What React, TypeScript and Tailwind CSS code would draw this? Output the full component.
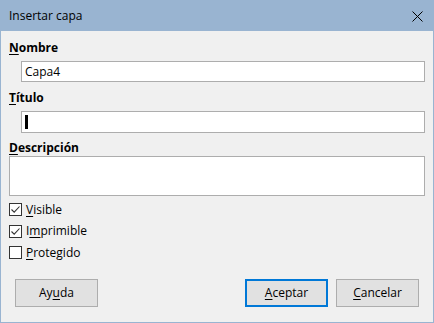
import React from 'react';

const font = { fontFamily: '"Open Sans", "Noto Sans", sans-serif' };

const Check = ({ checked }: { checked: boolean }) => (
  <span className="flex h-[13px] w-[13px] items-center justify-center border border-[#333333] bg-white">
    {checked && (
      <svg width="11" height="11" viewBox="0 0 11 11">
        <path d="M1.5 5.5 L4.2 8.2 L9.5 2.5" fill="none" stroke="#333333" strokeWidth="1.1" />
      </svg>
    )}
  </span>
);

const Btn = ({ children, primary }: { children: React.ReactNode; primary?: boolean }) => (
  <button
    className={`flex h-[28px] w-[83px] items-center justify-center bg-[#e1e1e1] text-[12px] text-black ${
      primary ? 'border-2 border-[#0078d7]' : 'border border-[#adadad]'
    }`}
  >
    {children}
  </button>
);

export default function App() {
  return (
    <div
      style={font}
      className="flex h-[323px] w-[434px] flex-col border border-[#99b4d1] bg-[#f0f0f0] text-[12px] text-black"
    >
      {/* Title bar */}
      <div className="flex h-[30px] shrink-0 items-center justify-between bg-[#99b4d1] pl-2 pr-[10px]">
        <span className="text-[12px] text-black">Insertar capa</span>
        <svg width="11" height="11" viewBox="0 0 11 11">
          <path d="M0.5 0.5 L10.5 10.5 M10.5 0.5 L0.5 10.5" stroke="#000" strokeWidth="1" />
        </svg>
      </div>

      <div className="flex flex-1 flex-col px-2">
        <div className="mt-[9px] h-[16px] font-bold leading-[16px]">
          <span className="underline underline-offset-2">N</span>ombre
        </div>
        <div className="ml-3 mt-[5px] flex h-[21px] items-center border border-[#adadad] bg-white px-[3px] leading-none">
          Capa4
        </div>

        <div className="mt-[8px] h-[16px] font-bold leading-[16px]">
          <span className="underline underline-offset-2">T</span>ítulo
        </div>
        <div className="ml-3 mt-[5px] flex h-[22px] items-center border border-[#adadad] bg-white px-[3px]">
          <span className="h-[14px] w-[3px] bg-black" />
        </div>

        <div className="mt-[7px] h-[16px] font-bold leading-[16px]">
          <span className="underline underline-offset-2">D</span>escripción
        </div>
        <div className="h-[40px] border border-[#adadad] bg-white" />

        <div className="mt-[3px] flex flex-col">
          <label className="flex h-[21.5px] items-center gap-[4px]">
            <Check checked />
            <span>
              <span className="underline underline-offset-2">V</span>isible
            </span>
          </label>
          <label className="flex h-[21.5px] items-center gap-[4px]">
            <Check checked />
            <span>
              I<span className="underline underline-offset-2">m</span>primible
            </span>
          </label>
          <label className="flex h-[21.5px] items-center gap-[4px]">
            <Check checked={false} />
            <span>
              <span className="underline underline-offset-2">P</span>rotegido
            </span>
          </label>
        </div>

        <div className="mt-auto mb-[15px] flex items-center px-[6px]">
          <Btn>
            Ay<span className="underline underline-offset-2">u</span>da
          </Btn>
          <div className="ml-auto flex gap-2">
            <Btn primary>
              <span className="underline underline-offset-2">A</span>ceptar
            </Btn>
            <Btn>
              <span className="underline underline-offset-2">C</span>ancelar
            </Btn>
          </div>
        </div>
      </div>
    </div>
  );
}
